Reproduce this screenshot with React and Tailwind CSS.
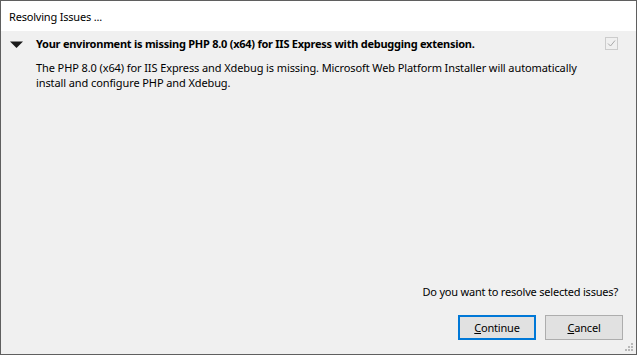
import React from 'react';

const Grip = () => (
  <svg className="absolute right-[2px] bottom-[2px]" width="10" height="10" viewBox="0 0 10 10">
    <rect x="7" y="1" width="2" height="2" fill="#b8b8b8" />
    <rect x="4" y="4" width="2" height="2" fill="#b8b8b8" />
    <rect x="7" y="4" width="2" height="2" fill="#b8b8b8" />
    <rect x="1" y="7" width="2" height="2" fill="#b8b8b8" />
    <rect x="4" y="7" width="2" height="2" fill="#b8b8b8" />
    <rect x="7" y="7" width="2" height="2" fill="#b8b8b8" />
  </svg>
);

const App = () => {
  return (
    <div className="relative w-[637px] h-[355px] flex flex-col bg-[#f0f0f0] border border-[#5f5f5f] text-[11px] leading-[15px] tracking-[-0.2px] text-black font-['Noto_Sans',sans-serif]">
      <div className="h-[30px] shrink-0 bg-white flex items-center pl-[8px]">
        <span>Resolving Issues ...</span>
      </div>

      <div className="flex-1 flex flex-col">
        <div className="flex items-start pt-[5px] pl-[9px] pr-[18px]">
          <svg className="mt-[5px] shrink-0" width="13" height="7" viewBox="0 0 13 7">
            <polygon points="0,0.5 13,0.5 6.5,7" fill="#1a1a1a" />
          </svg>
          <div className="ml-[13px] flex-1">
            <div className="font-bold tracking-[-0.25px]">
              Your environment is missing PHP 8.0 (x64) for IIS Express with debugging extension.
            </div>
            <div className="mt-[9px] whitespace-nowrap tracking-[-0.1px]">
              The PHP 8.0 (x64) for IIS Express and Xdebug is missing. Microsoft Web Platform Installer will automatically
              <br />
              install and configure PHP and Xdebug.
            </div>
          </div>
          <div className="mt-[1px] w-[13px] h-[13px] shrink-0 border border-[#cccccc] bg-[#f0f0f0] flex items-center justify-center">
            <svg width="11" height="11" viewBox="0 0 11 11">
              <polyline points="2,5.5 4.5,8 9,2.5" fill="none" stroke="#a8a8a8" strokeWidth="1" />
            </svg>
          </div>
        </div>

        <div className="flex-1" />

        <div className="flex justify-end pr-[18px]">
          <span>Do you want to resolve selected issues?</span>
        </div>

        <div className="flex justify-end gap-[9px] mt-[16px] mb-[14px] pr-[13px]">
          <button className="w-[78px] h-[25px] bg-[#e1e1e1] border-2 border-[#0078d7] flex items-center justify-center">
            <span><span className="underline">C</span>ontinue</span>
          </button>
          <button className="w-[78px] h-[25px] bg-[#e1e1e1] border border-[#adadad] flex items-center justify-center">
            <span><span className="underline">C</span>ancel</span>
          </button>
        </div>
      </div>

      <Grip />
    </div>
  );
};

export default App;
